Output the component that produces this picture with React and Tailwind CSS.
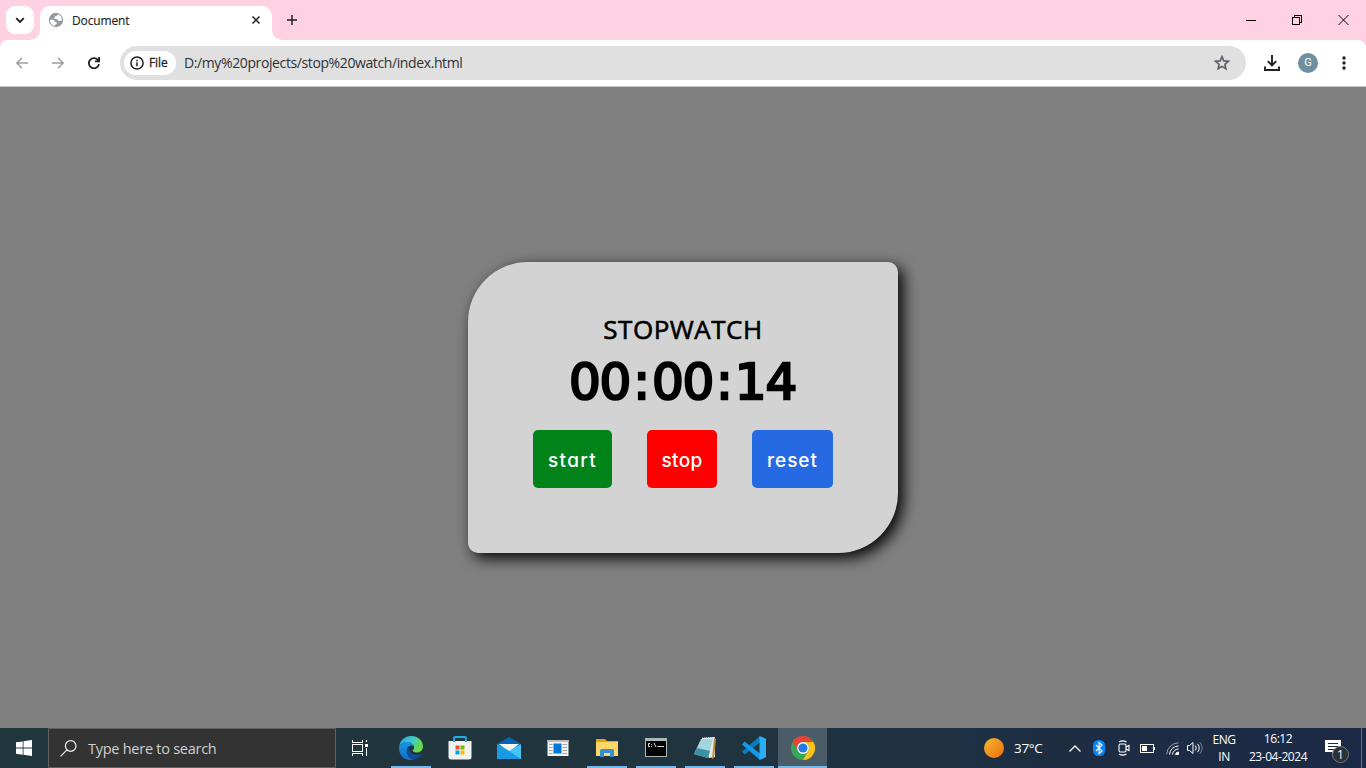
import React from "react";

const ui = "font-['Open_Sans','Noto_Sans',sans-serif]";

function TabStrip() {
  return (
    <div className="flex h-10 shrink-0 items-start bg-[#ffd2e3] pt-1.5 pl-1.5">
      <button className="flex h-7 w-7 items-center justify-center rounded-[9px] bg-white">
        <svg width="10" height="7" viewBox="0 0 10 7" fill="none" stroke="#1f1f1f" strokeWidth="1.8"><path d="M1.2 1.2 5 5l3.8-3.8" /></svg>
      </button>
      <div className="relative ml-1.5 flex h-[34px] w-[232px] rounded-t-[10px] bg-white pt-[6px] pl-[8px]">
        <svg className="absolute bottom-0 -left-2.5" width="10" height="10"><path d="M10 0v10H0A10 10 0 0 0 10 0Z" fill="#fff" /></svg>
        <svg className="absolute -right-2.5 bottom-0" width="10" height="10"><path d="M0 0v10h10A10 10 0 0 1 0 0Z" fill="#fff" /></svg>
        <svg width="16" height="16" viewBox="0 0 16 16">
          <circle cx="8" cy="8" r="7.2" fill="#949ba3" />
          <path d="M9.800 2.300c-.3 1.500-1.600 1.900-2.900 2.200-.5.900 0 1.500-.9 2.200 1 .7 2.900-.1 3.600.9.600.9.300 1.600 1.300 1.500 1 0 1.800-.6 3-.6A6 6 0 0 0 9.800 2.300ZM2 7.800a6 6 0 0 0 5 6.100c0-1 .300-1.600 1.300-1.900.7-.5.8-1.700-.2-2-1-.2-1.400-.3-1.700-1.300-.5-1-1.900-.9-4.400-.9Z" fill="#fff" />
        </svg>
        <span className="ml-2 h-4 w-[180px] shrink-0 text-[12px] leading-[17px] tracking-[-0.14px] text-[#1f1f1f] [-webkit-text-stroke:0.15px]">Document</span>
        <svg className="mt-1 h-2 w-2 shrink-0" viewBox="0 0 8 8" stroke="#1f1f1f" strokeWidth="1.500"><path d="m.5.5 7 7m0-7-7 7" /></svg>
      </div>
      <svg className="mt-[9px] ml-[15px]" width="10" height="10" viewBox="0 0 10 10" stroke="#1f1f1f" strokeWidth="1.500"><path d="M5 0v10M0 5h10" /></svg>
      <div className="mt-[8px] mr-[17px] ml-auto flex gap-[36px] text-black">
        <svg width="10" height="12" shapeRendering="crispEdges"><path d="M0 6.500h10" stroke="currentColor" /></svg>
        <svg className="-mr-px" width="11" height="12" fill="none" stroke="currentColor" shapeRendering="crispEdges"><path d="M.5 3.500h7v7h-7zM2.500 3.500v-2h7v7h-2" /></svg>
        <svg width="11" height="12" stroke="currentColor"><path d="m.5 1 10 10m0-10-10 10" /></svg>
      </div>
    </div>
  );
}

function Toolbar() {
  return (
    <div className="h-[47px] shrink-0 bg-[#ffd2e3]">
      <div className="flex h-[47px] items-center rounded-t-[8px] border-b border-[#c7c7c7] bg-white pl-4">
        <svg className="shrink-0" width="12" height="12" viewBox="0 0 12 12" fill="none" stroke="#a0a0a0" strokeWidth="1.500"><path d="M12 6H1M6 .7.900 6 6 11.300" /></svg>
        <svg className="ml-6 shrink-0" width="12" height="12" viewBox="0 0 12 12" fill="none" stroke="#a0a0a0" strokeWidth="1.500"><path d="M0 6h11M6 .7 11.100 6 6 11.300" /></svg>
        <svg className="ml-6 shrink-0" width="12" height="12" viewBox="0 0 12 12" fill="none" stroke="#1f1f1f" strokeWidth="1.800"><path d="M10.300 3.500A5.100 5.100 0 1 0 11 7.200M11.100.1v4.200H6.900" /></svg>
        <div className="ml-5 flex h-[34px] w-[1126px] items-center rounded-full bg-[#e0e0e0] pl-1">
          <div className="flex h-6 w-[52px] items-center rounded-full bg-white pl-[6px]">
            <svg className="shrink-0" width="14" height="14" viewBox="0 0 14 14" fill="none" stroke="#1f1f1f" strokeWidth="1.500"><circle cx="7" cy="7" r="6.100" /><path d="M7 6.200v4M7 3.700v1.500" /></svg>
            <span className="ml-[5px] text-[12px] leading-4 tracking-[-0.1px] text-[#1f1f1f] [-webkit-text-stroke:0.3px]">File</span>
          </div>
          <span className="ml-2 w-[1030px] text-[14px] leading-5 tracking-[-0.39px] whitespace-nowrap text-[#303134]">D:/my%20projects/stop%20watch/index.html</span>
          <svg width="16" height="16" viewBox="0 0 16 16" fill="none" stroke="#5f6368" strokeWidth="1.700"><path d="m8 1.700 1.800 4.200 4.600.4-3.500 3 1 4.500L8 11.400l-3.900 2.400 1-4.500-3.500-3 4.600-.4Z" /></svg>
        </div>
        <svg className="ml-[18px]" width="16" height="16" viewBox="0 0 16 16" fill="none" stroke="#1f1f1f" strokeWidth="1.900"><path d="M8 0v10M3.800 6.200 8 10.400l4.200-4.200M1 11.500V15h14v-3.500" /></svg>
        <div className="ml-[18px] flex h-5 w-5 items-center justify-center rounded-full bg-[#6f919f] font-['Roboto',sans-serif] text-[11px] text-white">G</div>
        <svg className="ml-6" width="4" height="14" viewBox="0 0 4 14" fill="#1f1f1f"><circle cx="2" cy="2" r="1.700" /><circle cx="2" cy="7" r="1.700" /><circle cx="2" cy="12" r="1.700" /></svg>
      </div>
    </div>
  );
}

const btn = "flex h-[58px] items-center justify-center rounded-[5px] pt-[4px] font-['Inter',sans-serif] text-[19px] font-medium text-white [font-feature-settings:'cv11']";

function Stopwatch() {
  return (
    <main className="flex flex-1 items-start justify-center bg-[#808080] pt-[175px]">
      <section className="flex h-[291px] w-[430px] flex-col items-center rounded-tl-[60px] rounded-tr-[10px] rounded-br-[60px] rounded-bl-[10px] bg-[#d3d3d3] pt-[49px] text-black shadow-[5px_5px_15px_black]">
        <h1 className="h-[36px] font-['Open_Sans',sans-serif] text-[26px] leading-[36px] font-medium tracking-[0.5px] whitespace-nowrap [-webkit-text-stroke:0.600px_black]">STOPWATCH</h1>
        <div className="mt-[4px] mr-px flex h-[62px] items-center justify-center font-['DejaVu_Sans',sans-serif] text-[50px] leading-[62px] tracking-[-1.200px] whitespace-nowrap [-webkit-text-stroke:2.400px_black]">
          <span>00</span><span className="mx-[3px]">:</span><span>00</span><span className="mx-[3px]">:</span><span>14</span>
        </div>
        <div className="mt-[17px] flex gap-[35px]">
          <button className={btn + " w-[79px] bg-[#02831a] tracking-[1.300px]"}>start</button>
          <button className={btn + " w-[70px] bg-[#ff0000] tracking-[0.300px]"}>stop</button>
          <button className={btn + " w-[81px] bg-[#256ae3] tracking-[1px]"}>reset</button>
        </div>
      </section>
    </main>
  );
}

function TaskItem({ children, open, active }) {
  return (
    <div className={"flex h-10 w-[49px] shrink-0 flex-col items-center " + (active ? "bg-[#4b5c69]" : "")}>
      <div className="flex h-[38px] items-center pt-[2px]">{children}</div>
      {open && <div className={"h-0.5 bg-[#76b9ed] " + (active ? "w-full" : "w-10")} />}
    </div>
  );
}

function Taskbar() {
  return (
    <footer className="flex h-10 shrink-0 items-stretch bg-linear-to-r from-[#20373e] via-[#20343f] to-[#1b2946] text-white">
      <div className="flex w-12 items-center justify-center">
        <svg width="16" height="16" viewBox="0 0 16 16" fill="#fff"><path d="m0 2.300 6.700-.9v6.200H0ZM7.500 1.300 16 0v7.600H7.500ZM0 8.400h6.700v6.300L0 13.800ZM7.500 8.400H16V16l-8.500-1.200Z" /></svg>
      </div>
      <div className="flex w-[288px] items-center border border-[#5f6061] bg-[#333333] pl-[11px]">
        <svg width="17" height="17" viewBox="0 0 17 17" fill="none" stroke="#eee" strokeWidth="1.200"><circle cx="10.700" cy="6" r="5.300" /><path d="M7 9.800.500 16.300" /></svg>
        <span className="mt-[2px] ml-[11px] text-[14.500px] leading-5 tracking-[-0.26px] text-[#d0d0d0]">Type here to search</span>
      </div>
      <div className="flex w-[50px] items-center pl-4">
        <svg width="17" height="16" viewBox="0 0 17 16" fill="none" stroke="#fff" shapeRendering="crispEdges"><path d="M.5 0v2.500h10V0M.5 4.500h10v7H.500zM.5 16v-2.500h10V16M14.500 0v2M14.500 8v8" /><path d="M13 4h3v3h-3z" fill="#fff" stroke="none" /></svg>
      </div>
      <TaskItem open>
        <svg width="24" height="24" viewBox="0 0 24 24">
          <defs>
            <linearGradient id="eg" x1="0" x2="1" y1="0" y2=".4"><stop stopColor="#259fdf" /><stop offset=".5" stopColor="#38c9d3" /><stop offset="1" stopColor="#68dc43" /></linearGradient>
            <linearGradient id="eb" x1="0" x2="0" y1="0" y2="1"><stop stopColor="#1793df" /><stop offset="1" stopColor="#126ecb" /></linearGradient>
          </defs>
          <path d="M.2 10.500C1 4.200 6 0 12 0c7 0 12 4.700 12 10.200 0 4-3 6.300-6.300 6.300-3 0-4-1-4-1.900 0-.8 1.400-1 1.400-3C15 8.500 12 6 8 6c-3.600 0-6.300 1.700-7.800 4.500Z" fill="url(#eg)" />
          <path d="M0 12C.300 8.300 3.600 6 8 6c3.700 0 6.500 2 7 4.500-3-2.600-7.300.2-7.300 4.200 0 4.400 3 8.200 7 9C7 25.600 0 20.500 0 12Z" fill="url(#eb)" />
          <path d="M9.400 10.900c-3.200 5 .6 11.600 5.700 12.700 3.300-.8 5.600-2.500 7.500-5.300.3-.5-.2-.7-.6-.5-5 2.300-12.100.4-12.600-6.900Z" fill="#104c99" />
        </svg>
      </TaskItem>
      <TaskItem>
        <svg width="24" height="24" viewBox="0 0 24 24"><path d="M6 6V2.200C6 1.500 6.500 1 7.200 1h9.600c.7 0 1.200.5 1.200 1.200V6" fill="none" stroke="#22aee8" strokeWidth="1.900" /><path d="M.500 5h23v16q0 2.500-2.500 2.500H3Q.500 23.500.500 21Z" fill="#f1f1f1" /><path d="M7.500 9.500h4v4h-4z" fill="#f25022" /><path d="M12.500 9.500h4v4h-4z" fill="#7fba00" /><path d="M7.500 14.500h4v4h-4z" fill="#00a4ef" /><path d="M12.500 14.500h4v4h-4z" fill="#ffb900" /><path d="M6 6V4.500M18 6V4.500" stroke="#22aee8" strokeWidth="1.900" /></svg>
      </TaskItem>
      <TaskItem>
        <svg width="24" height="24" viewBox="0 0 24 24"><path d="M0 8 12 1l12 7v5H0Z" fill="#0963b5" /><path d="M2 8h20L12 16Z" fill="#f5f5f5" /><path d="M0 8v15h24L12 15Z" fill="#29a9ed" /><path d="M24 8v15H0l12-8Z" fill="#45c5f5" /><path d="M12 15 24 23H0L0 8Z" fill="#189be5" /></svg>
      </TaskItem>
      <TaskItem>
        <svg width="22" height="22" viewBox="0 0 22 22"><path d="M.500 3h21v16H.500Z" fill="#f3f3f3" /><path d="M.500 3h21v2H.500Z" fill="#b9bec1" /><path d="M6.500 6.500h8v10h-8Z" fill="#0078d7" /><path d="M2 7.500h3.500m-3.500 3h3.500m-3.500 3h3.500m-3.500 3h3.500M15.500 7.500H20m-4.500 3H20m-4.500 3H20m-4.500 3H20" stroke="#a5a5a5" /></svg>
      </TaskItem>
      <TaskItem open>
        <svg width="22" height="22" viewBox="0 0 22 22"><path d="M0 2h9l2 2h11v15H0Z" fill="#e8a30b" /><path d="M0 5h22v14H0Z" fill="#ffd767" /><path d="M4 20v-6.500Q4 12 5.500 12h11q1.500 0 1.500 1.500V20h-4v-4H8v4Z" fill="#368fd5" /></svg>
      </TaskItem>
      <TaskItem open>
        <svg width="22" height="20" viewBox="0 0 22 20"><path d="M0 0h22v19H0Z" fill="#aeb8bb" /><path d="M1 3h20v15H1Z" fill="#050505" /><path d="M5 5.500H3.500v3H5M6.500 6v.8m0 1.200v.8M9 5l2 4M12.500 8.500H19" fill="none" stroke="#ddd" /></svg>
      </TaskItem>
      <TaskItem open>
        <svg width="24" height="24" viewBox="0 0 24 24"><path d="m9 2 13-1v20L16 22Z" fill="#eeeadd" /><path d="m21 2 2 1-2 19-2 1Z" fill="#b88b42" /><path d="M8 3h12l-5 19L1 18Z" fill="#a2d5de" /><path d="m4 12 13 3-2 7L1 18Z" fill="#3b91a4" /><path d="M9 2.500h11" stroke="#d8e4e5" strokeDasharray="1 1" strokeWidth="2" /></svg>
      </TaskItem>
      <TaskItem open>
        <svg width="24" height="24" viewBox="0 0 24 24"><path d="m0 15.500 2.500 3L18 6.500V0Z" fill="#087bc1" /><path d="m0 8.500 2.500-3L18 17.500V24Z" fill="#159be3" /><path d="m17.500 0 6.500 2.700v18.600L17.500 24Z" fill="#2bacf3" /></svg>
      </TaskItem>
      <TaskItem open active>
        <svg width="24" height="24" viewBox="0 0 24 24"><circle cx="12" cy="12" r="12" fill="#35a853" /><path d="M1.600 6A12 12 0 0 1 22.400 6H12a6 6 0 0 0-5.200 9Z" fill="#ea4335" /><path d="M22.400 6A12 12 0 0 1 12 24l5.200-9A6 6 0 0 0 12 6Z" fill="#fbc116" /><circle cx="12" cy="12" r="5.900" fill="#fff" /><circle cx="12" cy="12" r="4.600" fill="#2877e7" /></svg>
      </TaskItem>
      <div className="ml-auto flex items-center">
        <div className="h-5 w-5 rounded-full bg-linear-to-br from-[#f4b72c] to-[#ef6c0c]" />
        <span className="ml-[10px] w-[55px] text-[13.500px] tracking-[-0.3px]">37°C</span>
        <svg width="12" height="7" fill="none" stroke="#fff" strokeWidth="1.300"><path d="m.500 6.500 5.500-5.500 5.500 5.500" /></svg>
        <svg className="ml-3" width="12" height="16" viewBox="0 0 12 16"><rect width="12" height="16" rx="5.500" fill="#0687f7" /><path d="m3 5 6 6-3 2.500v-11L9 5l-6 6" fill="none" stroke="#fff" strokeWidth="1.100" /></svg>
        <svg className="ml-[13px]" width="12" height="16" viewBox="0 0 12 16" fill="none" stroke="#fff" strokeWidth="1.100"><path d="M1 2Q4.500-.2 8.500 2M1 14q3.500 2.200 7.500 0" /><rect x="1" y="4" width="7" height="8" rx="1.500" /><path d="m8 7 3-1.500v5L8 9" /></svg>
        <svg className="ml-[10px]" width="15" height="9" shapeRendering="crispEdges"><path d="M.500.500h13v8H.500z" fill="none" stroke="#fff" /><path d="M2 2h5v5H2zM14 3h1v3h-1z" fill="#fff" /></svg>
        <svg className="ml-[11px]" width="13" height="13" viewBox="0 0 13 13" fill="none" stroke="#fff"><path d="M.700 12.500A12 12 0 0 1 12.500.8" opacity=".55" /><path d="M3.500 12.500a9 9 0 0 1 9-8.500M6.500 12.500a6 6 0 0 1 6-5.500" /><path d="M9.500 12.500a3 3 0 0 1 3-2.500v2.500Z" fill="#fff" /></svg>
        <svg className="ml-2" width="16" height="14" viewBox="0 0 16 14" fill="none" stroke="#fff"><path d="M.500 4.500h2L6 1.500v11L2.500 9.500h-2ZM8.300 4.500q2 2.500 0 5M10.500 2.800q3.500 4.200 0 8.400" /><path d="M12.700 1q5 6 0 12" opacity=".4" /></svg>
        <div className="ml-[8px] flex w-[26px] flex-col items-center text-[12px] leading-[17px] tracking-[-0.5px]"><span>ENG</span><span>IN</span></div>
        <div className="ml-[10px] flex w-[62px] flex-col items-center text-[12px] leading-[18px] tracking-[-0.45px] whitespace-nowrap"><span>16:12</span><span>23-04-2024</span></div>
        <div className="relative ml-4 h-5 w-9">
          <svg width="17" height="17" viewBox="0 0 17 17"><path d="M0 2h16v12h-6l-3 3v-3H0Z" fill="#fff" /><path d="M3 5.500h10M3 8.500h10M3 11.500h7" stroke="#1b2946" /></svg>
          <span className="absolute top-[8px] left-[7px] flex h-[17px] w-[17px] items-center justify-center rounded-full border border-[#777] bg-[#2d3036] text-[12px] leading-none">1</span>
        </div>
        <div className="h-10 w-px bg-[#66738a]" />
        <div className="w-1" />
      </div>
    </footer>
  );
}

export default function App() {
  return (
    <div className={"flex h-[768px] w-[1366px] flex-col overflow-hidden " + ui}>
      <TabStrip />
      <Toolbar />
      <Stopwatch />
      <Taskbar />
    </div>
  );
}
